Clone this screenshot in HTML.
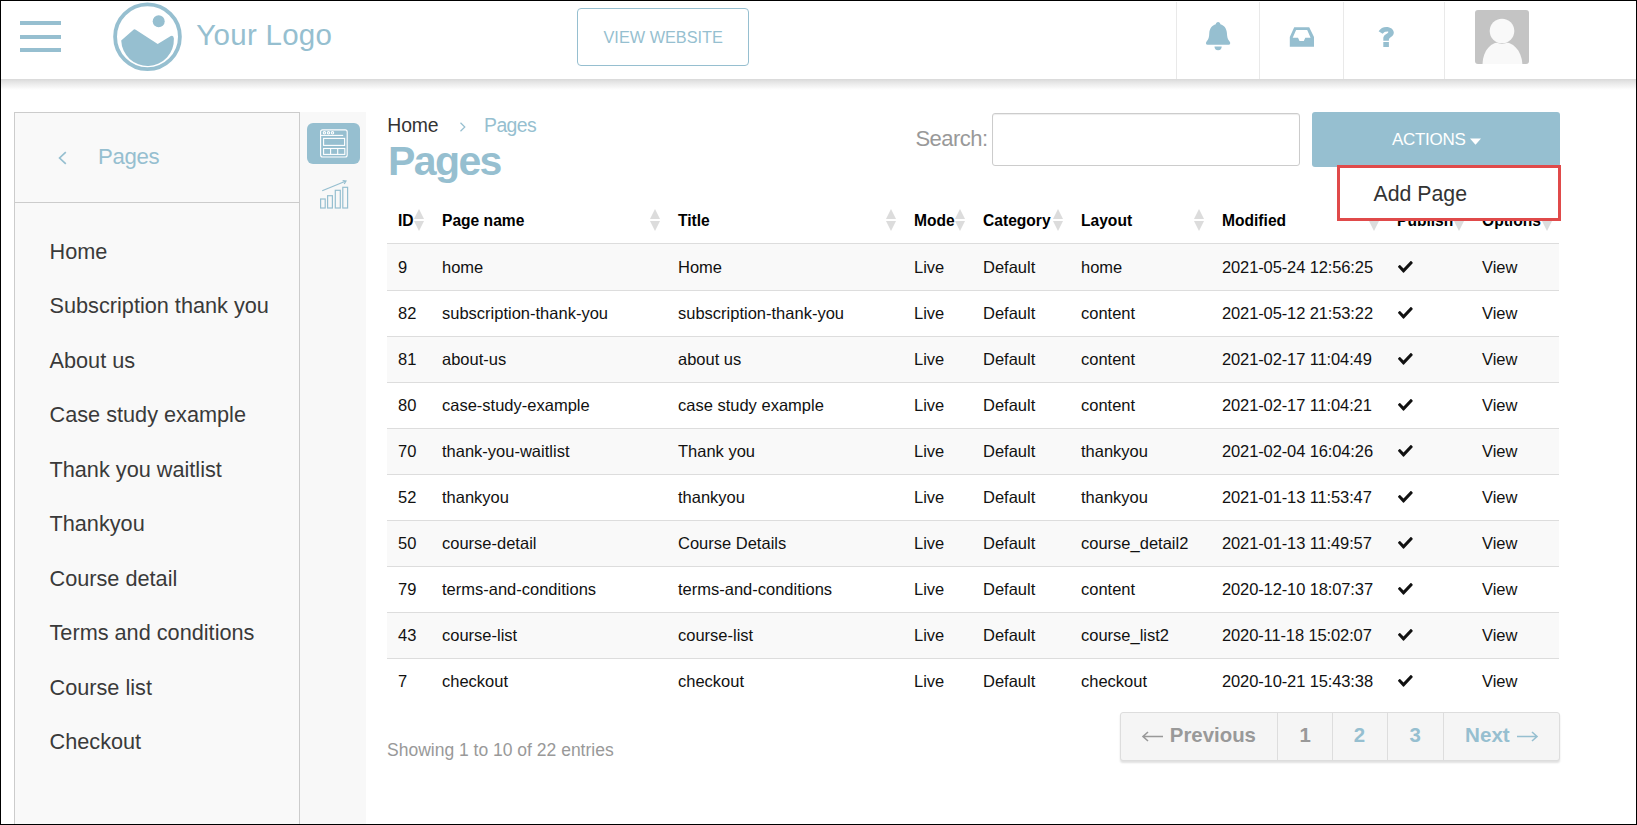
<!DOCTYPE html><html><head><meta charset="utf-8"><style>*{margin:0;padding:0;box-sizing:border-box}
html,body{width:1637px;height:825px;overflow:hidden;background:#fff;font-family:"Liberation Sans",sans-serif;position:relative}
.t{position:absolute;white-space:nowrap}
#frame{position:absolute;left:0;top:0;width:1637px;height:825px;border:1px solid #000;pointer-events:none;z-index:100}
#hdr{position:absolute;left:0;top:0;width:1637px;height:79px;background:#fff;z-index:5}
#hdrsh{position:absolute;left:0;top:79px;width:1637px;height:11px;background:linear-gradient(#d9d9d9,#e6e6e6 30%,#fafafa 85%,#fff);z-index:4}
.hb{position:absolute;left:20px;width:41px;height:4px;background:#96bfd0}
.sep{position:absolute;top:2px;width:1px;height:77px;background:#e9e9e9}
#vw{position:absolute;left:577px;top:8px;width:172px;height:58px;border:1px solid #96bfd0;border-radius:4px}
#side{position:absolute;left:14px;top:112px;width:286px;height:720px;background:#f9f9f9;border:1px solid #ccc;border-bottom:none}
#sidesep{position:absolute;left:15px;top:202px;width:284px;height:1px;background:#ccc}
#icol{position:absolute;left:300px;top:112px;width:66px;height:720px;background:#f8f8f8}
#iact{position:absolute;left:307px;top:123px;width:53px;height:41px;border-radius:6px;background:#96bfd0}
#search{position:absolute;left:992px;top:113px;width:308px;height:53px;border:1px solid #ccc;border-radius:3px;box-shadow:inset 0 1px 1px rgba(0,0,0,.075)}
#act{position:absolute;left:1312px;top:112px;width:248px;height:55px;border-radius:3px;background:#96bfd0}
.row{position:absolute;left:387px;width:1172px;height:46px}
.row.odd{background:#f9f9f9}
.row.bt{border-top:1px solid #ddd}
#thb{position:absolute;left:387px;top:243px;width:1172px;height:2px;background:#ddd}
.sort{position:absolute;top:209px;width:10px;height:22px}
.sort i{position:absolute;left:0;width:0;height:0;border-left:5px solid transparent;border-right:5px solid transparent}
.sort .up{top:0;border-bottom:10px solid #dcdcdc}
.sort .dn{top:12px;border-top:10px solid #dcdcdc}
.chk{position:absolute;fill:#111}
#dd{position:absolute;left:1337px;top:165px;width:224px;height:56px;background:#fff;border:3px solid #e04a4a;z-index:6}
#dd + .t{z-index:7}
#pg{position:absolute;left:1120px;top:712px;width:440px;height:49px;background:#f5f5f5;border:1px solid #ddd;border-radius:3px;box-shadow:0 2px 2px rgba(0,0,0,.12)}
.t{z-index:6}
#dd{z-index:7}
#dd + .t{z-index:8}
.pd{position:absolute;top:0;width:1px;height:47px;background:#ddd}
</style></head><body>
<div id="hdr">
<div class="hb" style="top:21px"></div><div class="hb" style="top:35px"></div><div class="hb" style="top:48px"></div>
<svg style="position:absolute;left:111px;top:1px" width="73" height="72" viewBox="111 1 73 72">
<circle cx="147.5" cy="36.8" r="32.4" fill="none" stroke="#96bfd0" stroke-width="3.8"/>
<circle cx="158.7" cy="21.3" r="6" fill="#96bfd0"/>
<path d="M121.2 40.6 L133.2 29.9 Q134.4 28.9 135.7 29.8 L157.7 44.1 L170.8 36 Q173.6 34.8 173.9 38.5 A26.2 26.2 0 0 1 121.2 40.6 Z" fill="#96bfd0"/>
</svg>
<div id="vw"></div>
<div class="sep" style="left:1176px"></div>
<div class="sep" style="left:1259px"></div>
<div class="sep" style="left:1343px"></div>
<div class="sep" style="left:1444px"></div>
<svg style="position:absolute;left:1203px;top:20px" width="30" height="33" viewBox="1203 20 30 33"><path fill="#96bfd0" d="M1218.1 22 C1219.4 22 1220.3 23 1220.4 24.3 C1224.2 25.4 1226.6 28.6 1226.9 33 C1227.2 37.3 1227.5 39.4 1229.6 41.4 C1230.6 42.4 1230.5 44.7 1228.6 44.7 L1207.6 44.7 C1205.7 44.7 1205.6 42.4 1206.6 41.4 C1208.7 39.4 1209.1 37.3 1209.3 33 C1209.6 28.6 1212 25.4 1215.8 24.3 C1215.9 23 1216.8 22 1218.1 22 Z M1214.5 46.6 H1221.7 A3.6 3.6 0 0 1 1214.5 46.6 Z"/></svg>
<svg style="position:absolute;left:1289px;top:27px" width="25" height="20" viewBox="1289 27 25 20"><path fill="#96bfd0" fill-rule="evenodd" d="M1294.2 27.2 L1309.2 27.2 L1314 36.9 L1314 46.8 L1289.8 46.8 L1289.8 36.9 Z M1296.1 29.9 L1307.2 29.9 L1310.6 37.8 L1305.3 37.8 L1303.8 41 L1299.5 41 L1298 37.8 L1292.7 37.8 Z"/></svg>
<svg style="position:absolute;left:1376px;top:24px" width="20" height="25" viewBox="1376 24 20 25"><path fill="#96bfd0" d="M1378.6 31.3 C1380.5 28.3 1383 26.9 1386.3 26.9 C1390.5 26.9 1393.8 29.3 1393.8 32.6 C1393.8 35.6 1391.3 37 1389.8 37.9 C1389.2 38.3 1388.9 38.9 1388.9 39.6 L1388.9 40.7 L1383.3 40.7 L1383.3 38.6 C1383.3 35.4 1385.5 34.5 1386.8 33.7 C1387.6 33.2 1388.3 32.8 1388.3 32.1 C1388.3 31.3 1387.3 31.7 1386.2 31.7 C1384.6 31.7 1383.8 32.3 1382.6 33.8 Z M1383.3 42 H1388.9 V46.9 H1383.3 Z"/></svg>
<svg style="position:absolute;left:1475px;top:10px" width="54" height="54" viewBox="0 0 54 54">
<defs><clipPath id="av"><rect x="0" y="0" width="54" height="54" rx="3"/></clipPath></defs>
<g clip-path="url(#av)"><rect width="54" height="54" fill="#c4c4c4"/>
<path d="M7.5 54 C8 40 16 31.7 27 31.7 C38 31.7 46.5 40 47.4 54 Z" fill="#f9f9f9"/>
<circle cx="27" cy="21" r="12.9" fill="#c4c4c4"/>
<circle cx="27" cy="21" r="12.3" fill="#f9f9f9"/>
</g></svg>
</div>
<div id="hdrsh"></div>
<div id="side"></div>
<div id="sidesep"></div>
<svg style="position:absolute;left:56px;top:149px" width="14" height="18" viewBox="56 149 14 18"><path d="M65.8 152.2 L59.6 158 L65.8 163.8" fill="none" stroke="#96bfd0" stroke-width="1.7"/></svg>
<div id="icol"></div>
<div id="iact"></div>
<svg style="position:absolute;left:318px;top:127px" width="32" height="33" viewBox="318 127 32 33" fill="none" stroke="#fff" stroke-width="1.1">
<rect x="320.6" y="129.9" width="26.6" height="27.1" rx="2"/>
<circle cx="324.4" cy="132.8" r="1.2"/><circle cx="328.5" cy="132.8" r="1.2"/><circle cx="332.5" cy="132.8" r="1.2"/>
<line x1="321" y1="135.4" x2="343.2" y2="135.4"/>
<rect x="323.6" y="138.4" width="21" height="7"/>
<rect x="323.6" y="148.5" width="21.2" height="5.9"/><line x1="330.6" y1="148.5" x2="330.6" y2="154.4"/><line x1="337.7" y1="148.5" x2="337.7" y2="154.4"/>
</svg>
<svg style="position:absolute;left:318px;top:178px" width="32" height="32" viewBox="318 178 32 32" fill="none" stroke="#96bfd0" stroke-width="1.2">
<path d="M322.2 190.7 L345.4 181.2"/><path d="M342.6 180.6 L346 181 L344.2 184" />
<rect x="320.6" y="199" width="4.6" height="9"/><rect x="327.6" y="195.7" width="4.8" height="12.3"/><rect x="335.3" y="190.3" width="5" height="17.7"/><rect x="342.8" y="187.3" width="4.8" height="20.7"/>
</svg>
<svg style="position:absolute;left:458px;top:121px" width="10" height="12" viewBox="458 121 10 12"><path d="M460.5 122.8 L464.8 127 L460.5 131.2" fill="none" stroke="#96bfd0" stroke-width="1.2"/></svg>
<div id="search"></div>
<div id="act"></div>
<svg style="position:absolute;left:1469px;top:137px;z-index:6" width="13" height="9" viewBox="1469 137 13 9"><path d="M1470 138.5 L1481 138.5 L1475.5 144.8 Z" fill="#fff"/></svg>
<div id="thb"></div>
<div id="pg">
<div class="pd" style="left:156px"></div><div class="pd" style="left:211px"></div><div class="pd" style="left:266px"></div><div class="pd" style="left:322px"></div>
</div>

<div class="t" style="left:196.3px;top:20.23px;font-size:29.5px;line-height:29.5px;color:#96bfd0;font-weight:normal;letter-spacing:0.28px">Your Logo</div>
<div class="t" style="left:603.5px;top:29.20px;font-size:16.3px;line-height:16.3px;color:#96bfd0;font-weight:normal;">VIEW WEBSITE</div>
<div class="t" style="left:98px;top:146.21px;font-size:22.2px;line-height:22.2px;color:#96bfd0;font-weight:normal;letter-spacing:-0.35px">Pages</div>
<div class="t" style="left:49.5px;top:241.03px;font-size:21.7px;line-height:21.7px;color:#3a3a3a;font-weight:normal;">Home</div>
<div class="t" style="left:49.5px;top:295.47px;font-size:21.7px;line-height:21.7px;color:#3a3a3a;font-weight:normal;">Subscription thank you</div>
<div class="t" style="left:49.5px;top:349.91px;font-size:21.7px;line-height:21.7px;color:#3a3a3a;font-weight:normal;">About us</div>
<div class="t" style="left:49.5px;top:404.35px;font-size:21.7px;line-height:21.7px;color:#3a3a3a;font-weight:normal;">Case study example</div>
<div class="t" style="left:49.5px;top:458.79px;font-size:21.7px;line-height:21.7px;color:#3a3a3a;font-weight:normal;">Thank you waitlist</div>
<div class="t" style="left:49.5px;top:513.23px;font-size:21.7px;line-height:21.7px;color:#3a3a3a;font-weight:normal;">Thankyou</div>
<div class="t" style="left:49.5px;top:567.67px;font-size:21.7px;line-height:21.7px;color:#3a3a3a;font-weight:normal;">Course detail</div>
<div class="t" style="left:49.5px;top:622.11px;font-size:21.7px;line-height:21.7px;color:#3a3a3a;font-weight:normal;">Terms and conditions</div>
<div class="t" style="left:49.5px;top:676.55px;font-size:21.7px;line-height:21.7px;color:#3a3a3a;font-weight:normal;">Course list</div>
<div class="t" style="left:49.5px;top:730.99px;font-size:21.7px;line-height:21.7px;color:#3a3a3a;font-weight:normal;">Checkout</div>
<div class="t" style="left:387.3px;top:115.78px;font-size:19.4px;line-height:19.4px;color:#333;font-weight:normal;letter-spacing:-0.15px">Home</div>
<div class="t" style="left:484px;top:115.78px;font-size:19.4px;line-height:19.4px;color:#96bfd0;font-weight:normal;letter-spacing:-0.55px">Pages</div>
<div class="t" style="left:388px;top:141.49px;font-size:41px;line-height:41px;color:#96bfd0;font-weight:bold;letter-spacing:-1.6px">Pages</div>
<div class="t" style="left:915.5px;top:128.38px;font-size:22px;line-height:22px;color:#999;font-weight:normal;letter-spacing:-0.55px">Search:</div>
<div class="t" style="left:1392px;top:131.41px;font-size:17px;line-height:17px;color:#fff;font-weight:normal;letter-spacing:-0.3px">ACTIONS</div>
<div class="t" style="left:398px;top:212.79px;font-size:15.6px;line-height:15.6px;color:#000;font-weight:bold;">ID</div>
<div class="sort" style="left:414px"><i class="up"></i><i class="dn"></i></div>
<div class="t" style="left:442px;top:212.79px;font-size:15.6px;line-height:15.6px;color:#000;font-weight:bold;">Page name</div>
<div class="sort" style="left:650px"><i class="up"></i><i class="dn"></i></div>
<div class="t" style="left:678px;top:212.79px;font-size:15.6px;line-height:15.6px;color:#000;font-weight:bold;">Title</div>
<div class="sort" style="left:886px"><i class="up"></i><i class="dn"></i></div>
<div class="t" style="left:914px;top:212.79px;font-size:15.6px;line-height:15.6px;color:#000;font-weight:bold;">Mode</div>
<div class="sort" style="left:955px"><i class="up"></i><i class="dn"></i></div>
<div class="t" style="left:983px;top:212.79px;font-size:15.6px;line-height:15.6px;color:#000;font-weight:bold;">Category</div>
<div class="sort" style="left:1053px"><i class="up"></i><i class="dn"></i></div>
<div class="t" style="left:1081px;top:212.79px;font-size:15.6px;line-height:15.6px;color:#000;font-weight:bold;">Layout</div>
<div class="sort" style="left:1194px"><i class="up"></i><i class="dn"></i></div>
<div class="t" style="left:1222px;top:212.79px;font-size:15.6px;line-height:15.6px;color:#000;font-weight:bold;">Modified</div>
<div class="sort" style="left:1369px"><i class="up"></i><i class="dn"></i></div>
<div class="t" style="left:1397px;top:212.79px;font-size:15.6px;line-height:15.6px;color:#000;font-weight:bold;">Publish</div>
<div class="sort" style="left:1454px"><i class="up"></i><i class="dn"></i></div>
<div class="t" style="left:1482px;top:212.79px;font-size:15.6px;line-height:15.6px;color:#000;font-weight:bold;">Options</div>
<div class="sort" style="left:1542px"><i class="up"></i><i class="dn"></i></div>
<div class="row odd" style="top:244px"></div>
<div class="t" style="left:398px;top:259.03px;font-size:16.5px;line-height:16.5px;color:#111;font-weight:normal;">9</div>
<div class="t" style="left:442px;top:259.03px;font-size:16.5px;line-height:16.5px;color:#111;font-weight:normal;">home</div>
<div class="t" style="left:678px;top:259.03px;font-size:16.5px;line-height:16.5px;color:#111;font-weight:normal;">Home</div>
<div class="t" style="left:914px;top:259.03px;font-size:16.5px;line-height:16.5px;color:#111;font-weight:normal;">Live</div>
<div class="t" style="left:983px;top:259.03px;font-size:16.5px;line-height:16.5px;color:#111;font-weight:normal;">Default</div>
<div class="t" style="left:1081px;top:259.03px;font-size:16.5px;line-height:16.5px;color:#111;font-weight:normal;">home</div>
<div class="t" style="left:1222px;top:259.03px;font-size:16.5px;line-height:16.5px;color:#111;font-weight:normal;letter-spacing:-0.12px">2021-05-24 12:56:25</div>
<svg class="chk" style="left:1398px;top:261.4px" viewBox="0 64 512 384" width="14.7" height="11.7" preserveAspectRatio="none"><path d="M173.9 439.4L7.5 273c-10-10-10-26.2 0-36.2l36.2-36.2c10-10 26.2-10 36.2 0L192 312.7 432.1 72.6c10-10 26.2-10 36.2 0l36.2 36.2c10 10 10 26.2 0 36.2L210.1 439.4c-10 10-26.2 10-36.2 0z"/></svg>
<div class="t" style="left:1482px;top:259.03px;font-size:16.5px;line-height:16.5px;color:#111;font-weight:normal;">View</div>
<div class="row bt" style="top:290px"></div>
<div class="t" style="left:398px;top:305.03px;font-size:16.5px;line-height:16.5px;color:#111;font-weight:normal;">82</div>
<div class="t" style="left:442px;top:305.03px;font-size:16.5px;line-height:16.5px;color:#111;font-weight:normal;">subscription-thank-you</div>
<div class="t" style="left:678px;top:305.03px;font-size:16.5px;line-height:16.5px;color:#111;font-weight:normal;">subscription-thank-you</div>
<div class="t" style="left:914px;top:305.03px;font-size:16.5px;line-height:16.5px;color:#111;font-weight:normal;">Live</div>
<div class="t" style="left:983px;top:305.03px;font-size:16.5px;line-height:16.5px;color:#111;font-weight:normal;">Default</div>
<div class="t" style="left:1081px;top:305.03px;font-size:16.5px;line-height:16.5px;color:#111;font-weight:normal;">content</div>
<div class="t" style="left:1222px;top:305.03px;font-size:16.5px;line-height:16.5px;color:#111;font-weight:normal;letter-spacing:-0.12px">2021-05-12 21:53:22</div>
<svg class="chk" style="left:1398px;top:307.4px" viewBox="0 64 512 384" width="14.7" height="11.7" preserveAspectRatio="none"><path d="M173.9 439.4L7.5 273c-10-10-10-26.2 0-36.2l36.2-36.2c10-10 26.2-10 36.2 0L192 312.7 432.1 72.6c10-10 26.2-10 36.2 0l36.2 36.2c10 10 10 26.2 0 36.2L210.1 439.4c-10 10-26.2 10-36.2 0z"/></svg>
<div class="t" style="left:1482px;top:305.03px;font-size:16.5px;line-height:16.5px;color:#111;font-weight:normal;">View</div>
<div class="row odd bt" style="top:336px"></div>
<div class="t" style="left:398px;top:351.03px;font-size:16.5px;line-height:16.5px;color:#111;font-weight:normal;">81</div>
<div class="t" style="left:442px;top:351.03px;font-size:16.5px;line-height:16.5px;color:#111;font-weight:normal;">about-us</div>
<div class="t" style="left:678px;top:351.03px;font-size:16.5px;line-height:16.5px;color:#111;font-weight:normal;">about us</div>
<div class="t" style="left:914px;top:351.03px;font-size:16.5px;line-height:16.5px;color:#111;font-weight:normal;">Live</div>
<div class="t" style="left:983px;top:351.03px;font-size:16.5px;line-height:16.5px;color:#111;font-weight:normal;">Default</div>
<div class="t" style="left:1081px;top:351.03px;font-size:16.5px;line-height:16.5px;color:#111;font-weight:normal;">content</div>
<div class="t" style="left:1222px;top:351.03px;font-size:16.5px;line-height:16.5px;color:#111;font-weight:normal;letter-spacing:-0.12px">2021-02-17 11:04:49</div>
<svg class="chk" style="left:1398px;top:353.4px" viewBox="0 64 512 384" width="14.7" height="11.7" preserveAspectRatio="none"><path d="M173.9 439.4L7.5 273c-10-10-10-26.2 0-36.2l36.2-36.2c10-10 26.2-10 36.2 0L192 312.7 432.1 72.6c10-10 26.2-10 36.2 0l36.2 36.2c10 10 10 26.2 0 36.2L210.1 439.4c-10 10-26.2 10-36.2 0z"/></svg>
<div class="t" style="left:1482px;top:351.03px;font-size:16.5px;line-height:16.5px;color:#111;font-weight:normal;">View</div>
<div class="row bt" style="top:382px"></div>
<div class="t" style="left:398px;top:397.03px;font-size:16.5px;line-height:16.5px;color:#111;font-weight:normal;">80</div>
<div class="t" style="left:442px;top:397.03px;font-size:16.5px;line-height:16.5px;color:#111;font-weight:normal;">case-study-example</div>
<div class="t" style="left:678px;top:397.03px;font-size:16.5px;line-height:16.5px;color:#111;font-weight:normal;">case study example</div>
<div class="t" style="left:914px;top:397.03px;font-size:16.5px;line-height:16.5px;color:#111;font-weight:normal;">Live</div>
<div class="t" style="left:983px;top:397.03px;font-size:16.5px;line-height:16.5px;color:#111;font-weight:normal;">Default</div>
<div class="t" style="left:1081px;top:397.03px;font-size:16.5px;line-height:16.5px;color:#111;font-weight:normal;">content</div>
<div class="t" style="left:1222px;top:397.03px;font-size:16.5px;line-height:16.5px;color:#111;font-weight:normal;letter-spacing:-0.12px">2021-02-17 11:04:21</div>
<svg class="chk" style="left:1398px;top:399.4px" viewBox="0 64 512 384" width="14.7" height="11.7" preserveAspectRatio="none"><path d="M173.9 439.4L7.5 273c-10-10-10-26.2 0-36.2l36.2-36.2c10-10 26.2-10 36.2 0L192 312.7 432.1 72.6c10-10 26.2-10 36.2 0l36.2 36.2c10 10 10 26.2 0 36.2L210.1 439.4c-10 10-26.2 10-36.2 0z"/></svg>
<div class="t" style="left:1482px;top:397.03px;font-size:16.5px;line-height:16.5px;color:#111;font-weight:normal;">View</div>
<div class="row odd bt" style="top:428px"></div>
<div class="t" style="left:398px;top:443.03px;font-size:16.5px;line-height:16.5px;color:#111;font-weight:normal;">70</div>
<div class="t" style="left:442px;top:443.03px;font-size:16.5px;line-height:16.5px;color:#111;font-weight:normal;">thank-you-waitlist</div>
<div class="t" style="left:678px;top:443.03px;font-size:16.5px;line-height:16.5px;color:#111;font-weight:normal;">Thank you</div>
<div class="t" style="left:914px;top:443.03px;font-size:16.5px;line-height:16.5px;color:#111;font-weight:normal;">Live</div>
<div class="t" style="left:983px;top:443.03px;font-size:16.5px;line-height:16.5px;color:#111;font-weight:normal;">Default</div>
<div class="t" style="left:1081px;top:443.03px;font-size:16.5px;line-height:16.5px;color:#111;font-weight:normal;">thankyou</div>
<div class="t" style="left:1222px;top:443.03px;font-size:16.5px;line-height:16.5px;color:#111;font-weight:normal;letter-spacing:-0.12px">2021-02-04 16:04:26</div>
<svg class="chk" style="left:1398px;top:445.4px" viewBox="0 64 512 384" width="14.7" height="11.7" preserveAspectRatio="none"><path d="M173.9 439.4L7.5 273c-10-10-10-26.2 0-36.2l36.2-36.2c10-10 26.2-10 36.2 0L192 312.7 432.1 72.6c10-10 26.2-10 36.2 0l36.2 36.2c10 10 10 26.2 0 36.2L210.1 439.4c-10 10-26.2 10-36.2 0z"/></svg>
<div class="t" style="left:1482px;top:443.03px;font-size:16.5px;line-height:16.5px;color:#111;font-weight:normal;">View</div>
<div class="row bt" style="top:474px"></div>
<div class="t" style="left:398px;top:489.03px;font-size:16.5px;line-height:16.5px;color:#111;font-weight:normal;">52</div>
<div class="t" style="left:442px;top:489.03px;font-size:16.5px;line-height:16.5px;color:#111;font-weight:normal;">thankyou</div>
<div class="t" style="left:678px;top:489.03px;font-size:16.5px;line-height:16.5px;color:#111;font-weight:normal;">thankyou</div>
<div class="t" style="left:914px;top:489.03px;font-size:16.5px;line-height:16.5px;color:#111;font-weight:normal;">Live</div>
<div class="t" style="left:983px;top:489.03px;font-size:16.5px;line-height:16.5px;color:#111;font-weight:normal;">Default</div>
<div class="t" style="left:1081px;top:489.03px;font-size:16.5px;line-height:16.5px;color:#111;font-weight:normal;">thankyou</div>
<div class="t" style="left:1222px;top:489.03px;font-size:16.5px;line-height:16.5px;color:#111;font-weight:normal;letter-spacing:-0.12px">2021-01-13 11:53:47</div>
<svg class="chk" style="left:1398px;top:491.4px" viewBox="0 64 512 384" width="14.7" height="11.7" preserveAspectRatio="none"><path d="M173.9 439.4L7.5 273c-10-10-10-26.2 0-36.2l36.2-36.2c10-10 26.2-10 36.2 0L192 312.7 432.1 72.6c10-10 26.2-10 36.2 0l36.2 36.2c10 10 10 26.2 0 36.2L210.1 439.4c-10 10-26.2 10-36.2 0z"/></svg>
<div class="t" style="left:1482px;top:489.03px;font-size:16.5px;line-height:16.5px;color:#111;font-weight:normal;">View</div>
<div class="row odd bt" style="top:520px"></div>
<div class="t" style="left:398px;top:535.03px;font-size:16.5px;line-height:16.5px;color:#111;font-weight:normal;">50</div>
<div class="t" style="left:442px;top:535.03px;font-size:16.5px;line-height:16.5px;color:#111;font-weight:normal;">course-detail</div>
<div class="t" style="left:678px;top:535.03px;font-size:16.5px;line-height:16.5px;color:#111;font-weight:normal;">Course Details</div>
<div class="t" style="left:914px;top:535.03px;font-size:16.5px;line-height:16.5px;color:#111;font-weight:normal;">Live</div>
<div class="t" style="left:983px;top:535.03px;font-size:16.5px;line-height:16.5px;color:#111;font-weight:normal;">Default</div>
<div class="t" style="left:1081px;top:535.03px;font-size:16.5px;line-height:16.5px;color:#111;font-weight:normal;">course_detail2</div>
<div class="t" style="left:1222px;top:535.03px;font-size:16.5px;line-height:16.5px;color:#111;font-weight:normal;letter-spacing:-0.12px">2021-01-13 11:49:57</div>
<svg class="chk" style="left:1398px;top:537.4px" viewBox="0 64 512 384" width="14.7" height="11.7" preserveAspectRatio="none"><path d="M173.9 439.4L7.5 273c-10-10-10-26.2 0-36.2l36.2-36.2c10-10 26.2-10 36.2 0L192 312.7 432.1 72.6c10-10 26.2-10 36.2 0l36.2 36.2c10 10 10 26.2 0 36.2L210.1 439.4c-10 10-26.2 10-36.2 0z"/></svg>
<div class="t" style="left:1482px;top:535.03px;font-size:16.5px;line-height:16.5px;color:#111;font-weight:normal;">View</div>
<div class="row bt" style="top:566px"></div>
<div class="t" style="left:398px;top:581.03px;font-size:16.5px;line-height:16.5px;color:#111;font-weight:normal;">79</div>
<div class="t" style="left:442px;top:581.03px;font-size:16.5px;line-height:16.5px;color:#111;font-weight:normal;">terms-and-conditions</div>
<div class="t" style="left:678px;top:581.03px;font-size:16.5px;line-height:16.5px;color:#111;font-weight:normal;">terms-and-conditions</div>
<div class="t" style="left:914px;top:581.03px;font-size:16.5px;line-height:16.5px;color:#111;font-weight:normal;">Live</div>
<div class="t" style="left:983px;top:581.03px;font-size:16.5px;line-height:16.5px;color:#111;font-weight:normal;">Default</div>
<div class="t" style="left:1081px;top:581.03px;font-size:16.5px;line-height:16.5px;color:#111;font-weight:normal;">content</div>
<div class="t" style="left:1222px;top:581.03px;font-size:16.5px;line-height:16.5px;color:#111;font-weight:normal;letter-spacing:-0.12px">2020-12-10 18:07:37</div>
<svg class="chk" style="left:1398px;top:583.4px" viewBox="0 64 512 384" width="14.7" height="11.7" preserveAspectRatio="none"><path d="M173.9 439.4L7.5 273c-10-10-10-26.2 0-36.2l36.2-36.2c10-10 26.2-10 36.2 0L192 312.7 432.1 72.6c10-10 26.2-10 36.2 0l36.2 36.2c10 10 10 26.2 0 36.2L210.1 439.4c-10 10-26.2 10-36.2 0z"/></svg>
<div class="t" style="left:1482px;top:581.03px;font-size:16.5px;line-height:16.5px;color:#111;font-weight:normal;">View</div>
<div class="row odd bt" style="top:612px"></div>
<div class="t" style="left:398px;top:627.03px;font-size:16.5px;line-height:16.5px;color:#111;font-weight:normal;">43</div>
<div class="t" style="left:442px;top:627.03px;font-size:16.5px;line-height:16.5px;color:#111;font-weight:normal;">course-list</div>
<div class="t" style="left:678px;top:627.03px;font-size:16.5px;line-height:16.5px;color:#111;font-weight:normal;">course-list</div>
<div class="t" style="left:914px;top:627.03px;font-size:16.5px;line-height:16.5px;color:#111;font-weight:normal;">Live</div>
<div class="t" style="left:983px;top:627.03px;font-size:16.5px;line-height:16.5px;color:#111;font-weight:normal;">Default</div>
<div class="t" style="left:1081px;top:627.03px;font-size:16.5px;line-height:16.5px;color:#111;font-weight:normal;">course_list2</div>
<div class="t" style="left:1222px;top:627.03px;font-size:16.5px;line-height:16.5px;color:#111;font-weight:normal;letter-spacing:-0.12px">2020-11-18 15:02:07</div>
<svg class="chk" style="left:1398px;top:629.4px" viewBox="0 64 512 384" width="14.7" height="11.7" preserveAspectRatio="none"><path d="M173.9 439.4L7.5 273c-10-10-10-26.2 0-36.2l36.2-36.2c10-10 26.2-10 36.2 0L192 312.7 432.1 72.6c10-10 26.2-10 36.2 0l36.2 36.2c10 10 10 26.2 0 36.2L210.1 439.4c-10 10-26.2 10-36.2 0z"/></svg>
<div class="t" style="left:1482px;top:627.03px;font-size:16.5px;line-height:16.5px;color:#111;font-weight:normal;">View</div>
<div class="row bt" style="top:658px"></div>
<div class="t" style="left:398px;top:673.03px;font-size:16.5px;line-height:16.5px;color:#111;font-weight:normal;">7</div>
<div class="t" style="left:442px;top:673.03px;font-size:16.5px;line-height:16.5px;color:#111;font-weight:normal;">checkout</div>
<div class="t" style="left:678px;top:673.03px;font-size:16.5px;line-height:16.5px;color:#111;font-weight:normal;">checkout</div>
<div class="t" style="left:914px;top:673.03px;font-size:16.5px;line-height:16.5px;color:#111;font-weight:normal;">Live</div>
<div class="t" style="left:983px;top:673.03px;font-size:16.5px;line-height:16.5px;color:#111;font-weight:normal;">Default</div>
<div class="t" style="left:1081px;top:673.03px;font-size:16.5px;line-height:16.5px;color:#111;font-weight:normal;">checkout</div>
<div class="t" style="left:1222px;top:673.03px;font-size:16.5px;line-height:16.5px;color:#111;font-weight:normal;letter-spacing:-0.12px">2020-10-21 15:43:38</div>
<svg class="chk" style="left:1398px;top:675.4px" viewBox="0 64 512 384" width="14.7" height="11.7" preserveAspectRatio="none"><path d="M173.9 439.4L7.5 273c-10-10-10-26.2 0-36.2l36.2-36.2c10-10 26.2-10 36.2 0L192 312.7 432.1 72.6c10-10 26.2-10 36.2 0l36.2 36.2c10 10 10 26.2 0 36.2L210.1 439.4c-10 10-26.2 10-36.2 0z"/></svg>
<div class="t" style="left:1482px;top:673.03px;font-size:16.5px;line-height:16.5px;color:#111;font-weight:normal;">View</div>
<div id="dd"></div>
<div class="t" style="left:1373.5px;top:183.77px;font-size:21.3px;line-height:21.3px;color:#333;font-weight:normal;">Add Page</div>
<div class="t" style="left:387px;top:742.19px;font-size:17.5px;line-height:17.5px;color:#999;font-weight:normal;">Showing 1 to 10 of 22 entries</div>
<div class="t" style="left:1169.8px;top:725.23px;font-size:20.4px;line-height:20.4px;color:#999;font-weight:bold;">Previous</div>
<div class="t" style="left:1299.4px;top:725.23px;font-size:20.4px;line-height:20.4px;color:#999;font-weight:bold;">1</div>
<div class="t" style="left:1353.7px;top:725.23px;font-size:20.4px;line-height:20.4px;color:#96bfd0;font-weight:bold;">2</div>
<div class="t" style="left:1409.4px;top:725.23px;font-size:20.4px;line-height:20.4px;color:#96bfd0;font-weight:bold;">3</div>
<div class="t" style="left:1465.1px;top:725.06px;font-size:20.6px;line-height:20.6px;color:#96bfd0;font-weight:bold;">Next</div>
<svg style="position:absolute;left:1141px;top:729px;z-index:6" width="24" height="14" viewBox="1141 729 24 14"><path d="M1143 736.5 H1163 M1148 732 L1143 736.5 L1148 741" fill="none" stroke="#999" stroke-width="1.6"/></svg>
<svg style="position:absolute;left:1515px;top:729px;z-index:6" width="24" height="14" viewBox="1515 729 24 14"><path d="M1517 736.5 H1537 M1532 732 L1537 736.5 L1532 741" fill="none" stroke="#96bfd0" stroke-width="1.6"/></svg>
<div id="frame"></div></body></html>
